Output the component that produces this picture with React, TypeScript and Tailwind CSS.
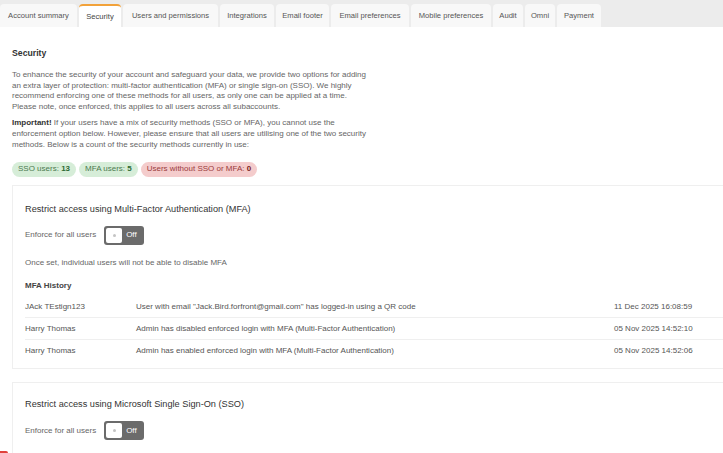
const tabs = [
  { label: 'Account summary', w: 'w-[77px]' },
  { label: 'Security', w: 'w-[42px]', active: true },
  { label: 'Users and permissions', w: 'w-[95px]' },
  { label: 'Integrations', w: 'w-[54px]' },
  { label: 'Email footer', w: 'w-[53px]' },
  { label: 'Email preferences', w: 'w-[78px]' },
  { label: 'Mobile preferences', w: 'w-[80px]' },
  { label: 'Audit', w: 'w-[30px]' },
  { label: 'Omni', w: 'w-[30px]' },
  { label: 'Payment', w: 'w-[44px]' },
];

const history = [
  {
    name: 'JAck TEstign123',
    text: 'User with email "Jack.Bird.forfront@gmail.com" has logged-in using a QR code',
    date: '11 Dec 2025 16:08:59',
  },
  {
    name: 'Harry Thomas',
    text: 'Admin has disabled enforced login with MFA (Multi-Factor Authentication)',
    date: '05 Nov 2025 14:52:10',
  },
  {
    name: 'Harry Thomas',
    text: 'Admin has enabled enforced login with MFA (Multi-Factor Authentication)',
    date: '05 Nov 2025 14:52:06',
  },
];

const Toggle = () => (
  <div className="flex items-center w-[40px] h-[19px] rounded-[3px] bg-[#6b6b6b] px-[2px]">
    <div className="flex items-center justify-center w-[16px] h-[15px] rounded-[2px] bg-white">
      <div className="w-[3px] h-[3px] rounded-full bg-[#c4c4c4]" />
    </div>
    <span className="ml-[4px] text-[8px] leading-none text-white">Off</span>
  </div>
);

const EnforceRow = () => (
  <div className="flex items-center gap-[8px] mt-[11px]">
    <span className="text-[8px] text-[#666]">Enforce for all users</span>
    <Toggle />
  </div>
);

export default function App() {
  return (
    <div
      className="relative w-[723px] h-[453px] overflow-hidden bg-white text-[#555]"
      style={{ fontFamily: '"Liberation Sans", Arial, sans-serif' }}
    >
      {/* tab bar */}
      <div className="flex items-end gap-[2px] h-[27px] bg-[#ececec]">
        {tabs.map((t) => (
          <div
            key={t.label}
            className={`${t.w} h-[23px] flex items-center justify-center rounded-t-[4px] text-[7.6px] whitespace-nowrap ${
              t.active ? 'bg-white border-t-2 border-[#f2a23a] text-[#444]' : 'bg-[#f8f8f8] text-[#555]'
            }`}
          >
            {t.label}
          </div>
        ))}
      </div>

      <div className="pl-[12px]">
        <h2 className="mt-[20px] text-[8.7px] leading-[12px] font-bold text-[#333]">Security</h2>

        <p className="mt-[11px] w-[357px] text-[8px] leading-[10.67px] text-[#666]">
          To enhance the security of your account and safeguard your data, we provide two options for adding
          an extra layer of protection: multi-factor authentication (MFA) or single sign-on (SSO). We highly
          recommend enforcing one of these methods for all users, as only one can be applied at a time.
          Please note, once enforced, this applies to all users across all subaccounts.
        </p>

        <p className="mt-[5.7px] w-[362px] text-[8px] leading-[10.67px] text-[#666]">
          <b className="text-[#333]">Important!</b>{' '}
          <span>
            If your users have a mix of security methods (SSO or MFA), you cannot use the enforcement option
            below. However, please ensure that all users are utilising one of the two security methods. Below is
            a count of the security methods currently in use:
          </span>
        </p>

        <div className="flex gap-[3px] mt-[11.5px]">
          <span className="h-[15px] px-[6px] flex items-center rounded-full bg-[#d6edd8] text-[8px] text-[#4b7a4f]">
            SSO users:&nbsp;<b className="text-[#2e6a34]">13</b>
          </span>
          <span className="h-[15px] px-[6px] flex items-center rounded-full bg-[#d6edd8] text-[8px] text-[#4b7a4f]">
            MFA users:&nbsp;<b className="text-[#2e6a34]">5</b>
          </span>
          <span className="h-[15px] px-[6px] flex items-center rounded-full bg-[#f4cccc] text-[8px] text-[#9b3b3b]">
            Users without SSO or MFA:&nbsp;<b className="text-[#7a2222]">0</b>
          </span>
        </div>

        {/* MFA card */}
        <div className="mt-[8px] w-[760px] border border-[#efefef] pl-[12px] pt-[17px] pb-[6px]">
          <h3 className="text-[9.2px] leading-[12px] text-[#333]">
            Restrict access using Multi-Factor Authentication (MFA)
          </h3>
          <EnforceRow />
          <p className="mt-[12px] text-[8px] leading-[11px] text-[#666]">
            Once set, individual users will not be able to disable MFA
          </p>
          <h4 className="mt-[12.5px] text-[8px] leading-[11px] font-bold text-[#444]">MFA History</h4>
          <div className="mt-[5px]">
            {history.map((h, i) => (
              <div
                key={i}
                className={`grid grid-cols-[111px_478px_1fr] items-center h-[22px] text-[8px] text-[#555] ${
                  i < history.length - 1 ? 'border-b border-[#efefef]' : ''
                }`}
              >
                <span>{h.name}</span>
                <span>{h.text}</span>
                <span>{h.date}</span>
              </div>
            ))}
          </div>
        </div>

        {/* SSO card */}
        <div className="mt-[13px] w-[760px] h-[120px] border border-[#efefef] pl-[12px] pt-[15px]">
          <h3 className="text-[9.2px] leading-[12px] text-[#333]">
            Restrict access using Microsoft Single Sign-On (SSO)
          </h3>
          <EnforceRow />
        </div>
      </div>

      <div className="absolute left-0 bottom-0 w-[8px] h-[2px] rounded-tr-[2px] bg-[#e0413b]" />
    </div>
  );
}
